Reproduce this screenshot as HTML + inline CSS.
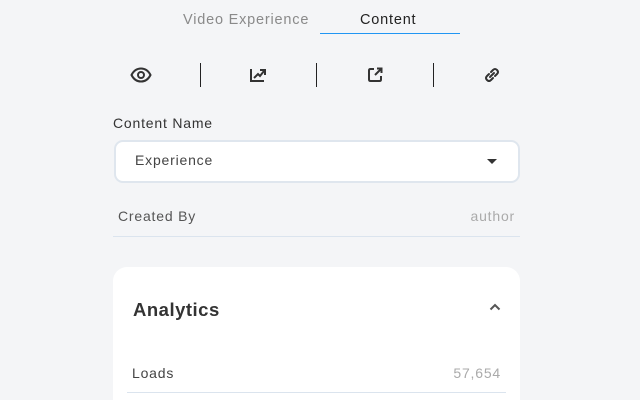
<!DOCTYPE html>
<html><head><style>
html,body{margin:0;width:640px;height:400px;overflow:hidden}
body{background:#f4f5f7;font-family:"Liberation Sans",sans-serif;position:relative}
.a{position:absolute;white-space:nowrap;letter-spacing:0.8px}
</style></head><body>
<div class="a" style="left:183px;top:12px;font-size:14.5px;color:#8a8a8a">Video Experience</div>
<div class="a" style="left:360px;top:12px;font-size:14.5px;color:#222">Content</div>
<div class="a" style="left:320px;top:33px;width:140px;height:1px;background:#2196f3"></div>

<svg class="a" style="left:130px;top:66px" width="22" height="18" viewBox="0 0 22 18"><path d="M1.5 9C4 4 7.5 2.5 11 2.5S18 4 20.5 9C18 14 14.5 15.5 11 15.5S4 14 1.5 9Z" fill="none" stroke="#333" stroke-width="2"/><circle cx="11" cy="9" r="3" fill="none" stroke="#333" stroke-width="2"/></svg>
<div class="a" style="left:200px;top:63px;width:1px;height:24px;background:#222"></div>
<svg class="a" style="left:249px;top:66px" width="18" height="18" viewBox="0 0 18 18"><path d="M2 3V15H15" fill="none" stroke="#333" stroke-width="2"/><path d="M5 12L9 8L11 10L15 5M11 4H16V9" fill="none" stroke="#333" stroke-width="2"/></svg>
<div class="a" style="left:316px;top:63px;width:1px;height:24px;background:#222"></div>
<svg class="a" style="left:366px;top:66px" width="18" height="18" viewBox="0 0 18 18"><path d="M8 3H4.5Q3 3 3 4.5V13.5Q3 15 4.5 15H13.5Q15 15 15 13.5V10" fill="none" stroke="#333" stroke-width="2"/><path d="M9 9L15 3M11 2.5H15.5V7" fill="none" stroke="#333" stroke-width="2"/></svg>
<div class="a" style="left:433px;top:63px;width:1px;height:24px;background:#222"></div>
<svg class="a" style="left:483px;top:66px" width="18" height="18" viewBox="0 0 18 18"><path d="M8 6L10 4Q12 2 14 4Q16 6 14 8L12 10M10 12L8 14Q6 16 4 14Q2 12 4 10L6 8M7 11L11 7" fill="none" stroke="#333" stroke-width="2" stroke-linecap="round"/></svg>

<div class="a" style="left:113px;top:115px;font-size:14px;color:#333">Content Name</div>
<div class="a" style="left:114px;top:140px;width:402px;height:39px;background:#fff;border:2px solid #dfe6ee;border-radius:9px"></div>
<div class="a" style="left:135px;top:152px;font-size:14px;color:#444">Experience</div>
<div class="a" style="left:487px;top:159px;width:0;height:0;border-left:5px solid transparent;border-right:5px solid transparent;border-top:5px solid #333"></div>

<div class="a" style="left:118px;top:208px;font-size:14px;color:#555">Created By</div>
<div class="a" style="right:125px;top:208px;font-size:14px;color:#aaa">author</div>
<div class="a" style="left:113px;top:236px;width:407px;height:1px;background:#dbe4ee"></div>

<div class="a" style="left:113px;top:267px;width:407px;height:133px;background:#fff;border-radius:14px 14px 0 0"></div>
<div class="a" style="left:133px;top:299px;font-size:18.5px;font-weight:bold;color:#333;letter-spacing:0.5px">Analytics</div>
<svg class="a" style="left:489px;top:303px" width="12" height="8" viewBox="0 0 12 8"><path d="M1.5 6.5L6 2L10.5 6.5" fill="none" stroke="#555" stroke-width="2"/></svg>
<div class="a" style="left:132px;top:365px;font-size:14px;color:#444">Loads</div>
<div class="a" style="right:139px;top:365px;font-size:14px;color:#aaa">57,654</div>
<div class="a" style="left:127px;top:392px;width:379px;height:1px;background:#dbe4ee"></div>
</body></html>
